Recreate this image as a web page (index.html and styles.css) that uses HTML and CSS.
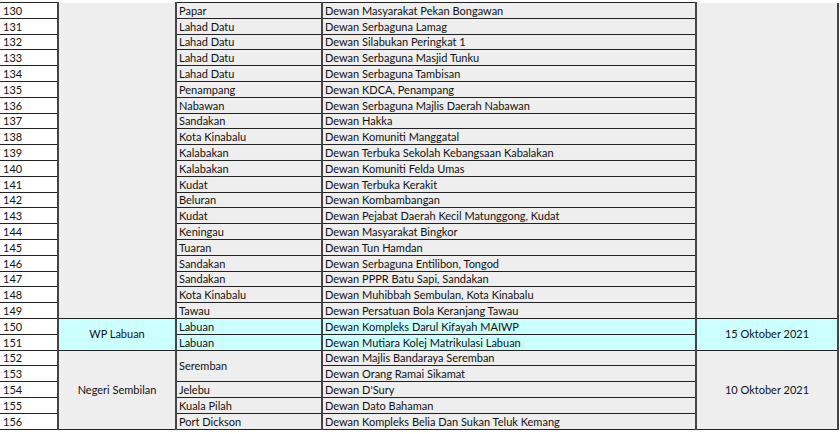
FILE: index.html
```html
<!DOCTYPE html>
<html>
<head>
<meta charset="utf-8">
<link rel="stylesheet" href="styles.css">
</head>
<body>
<table class="sheet">
<colgroup>
<col class="c-no"><col class="c-state"><col class="c-dist"><col class="c-hall"><col class="c-date">
</colgroup>
<tbody>
<tr><td class="no">130</td><td class="state cont" rowspan="20"></td><td class="dist">Papar</td><td class="hall">Dewan Masyarakat Pekan Bongawan</td><td class="date cont" rowspan="20"></td></tr>
<tr><td class="no">131</td><td class="dist">Lahad Datu</td><td class="hall">Dewan Serbaguna Lamag</td></tr>
<tr><td class="no">132</td><td class="dist">Lahad Datu</td><td class="hall">Dewan Silabukan Peringkat 1</td></tr>
<tr><td class="no">133</td><td class="dist">Lahad Datu</td><td class="hall">Dewan Serbaguna Masjid Tunku</td></tr>
<tr><td class="no">134</td><td class="dist">Lahad Datu</td><td class="hall">Dewan Serbaguna Tambisan</td></tr>
<tr><td class="no">135</td><td class="dist">Penampang</td><td class="hall">Dewan KDCA, Penampang</td></tr>
<tr><td class="no">136</td><td class="dist">Nabawan</td><td class="hall">Dewan Serbaguna Majlis Daerah Nabawan</td></tr>
<tr><td class="no">137</td><td class="dist">Sandakan</td><td class="hall">Dewan Hakka</td></tr>
<tr><td class="no">138</td><td class="dist">Kota Kinabalu</td><td class="hall">Dewan Komuniti Manggatal</td></tr>
<tr><td class="no">139</td><td class="dist">Kalabakan</td><td class="hall">Dewan Terbuka Sekolah Kebangsaan Kabalakan</td></tr>
<tr><td class="no">140</td><td class="dist">Kalabakan</td><td class="hall">Dewan Komuniti Felda Umas</td></tr>
<tr><td class="no">141</td><td class="dist">Kudat</td><td class="hall">Dewan Terbuka Kerakit</td></tr>
<tr><td class="no">142</td><td class="dist">Beluran</td><td class="hall">Dewan Kombambangan</td></tr>
<tr><td class="no">143</td><td class="dist">Kudat</td><td class="hall">Dewan Pejabat Daerah Kecil Matunggong, Kudat</td></tr>
<tr><td class="no">144</td><td class="dist">Keningau</td><td class="hall">Dewan Masyarakat Bingkor</td></tr>
<tr><td class="no">145</td><td class="dist">Tuaran</td><td class="hall">Dewan Tun Hamdan</td></tr>
<tr><td class="no">146</td><td class="dist">Sandakan</td><td class="hall">Dewan Serbaguna Entilibon, Tongod</td></tr>
<tr><td class="no">147</td><td class="dist">Sandakan</td><td class="hall">Dewan PPPR Batu Sapi, Sandakan</td></tr>
<tr><td class="no">148</td><td class="dist">Kota Kinabalu</td><td class="hall">Dewan Muhibbah Sembulan, Kota Kinabalu</td></tr>
<tr><td class="no">149</td><td class="dist">Tawau</td><td class="hall">Dewan Persatuan Bola Keranjang Tawau</td></tr>
<tr class="cyan"><td class="no">150</td><td class="state" rowspan="2">WP Labuan</td><td class="dist">Labuan</td><td class="hall">Dewan Kompleks Darul Kifayah MAIWP</td><td class="date" rowspan="2">15 Oktober 2021</td></tr>
<tr class="cyan"><td class="no">151</td><td class="dist">Labuan</td><td class="hall">Dewan Mutiara Kolej Matrikulasi Labuan</td></tr>
<tr><td class="no">152</td><td class="state" rowspan="5">Negeri Sembilan</td><td class="dist" rowspan="2">Seremban</td><td class="hall">Dewan Majlis Bandaraya Seremban</td><td class="date" rowspan="5">10 Oktober 2021</td></tr>
<tr><td class="no">153</td><td class="hall">Dewan Orang Ramai Sikamat</td></tr>
<tr><td class="no">154</td><td class="dist">Jelebu</td><td class="hall">Dewan D'Sury</td></tr>
<tr><td class="no">155</td><td class="dist">Kuala Pilah</td><td class="hall">Dewan Dato Bahaman</td></tr>
<tr><td class="no">156</td><td class="dist">Port Dickson</td><td class="hall">Dewan Kompleks Belia Dan Sukan Teluk Kemang</td></tr>
</tbody>
</table>
</body>
</html>
```
FILE: styles.css
```css
html, body {
  margin: 0;
  padding: 0;
  background: #ffffff;
}
body {
  padding-top: 2px;
}
.sheet {
  border-collapse: collapse;
  table-layout: fixed;
  width: 838px;
  font-family: Lato, "Open Sans", sans-serif;
  font-size: 11px;
  color: #111;
}
.c-no { width: 58px; }
.c-state { width: 118px; }
.c-dist { width: 146px; }
.c-hall { width: 374px; }
.c-date { width: 142px; }
.sheet td {
  height: 15.8px;
  padding: 0 2px;
  box-sizing: border-box;
  border-top: 1px solid #222;
  border-bottom: 1px solid #222;
  border-left: 2px solid #444;
  border-right: 2px solid #444;
  background: #eeeeee;
  white-space: nowrap;
  overflow: hidden;
  line-height: 14px;
  vertical-align: bottom;
}
.sheet td.no {
  background: #ffffff;
  border-left: none;
  padding-left: 3px;
}
.sheet td.state, .sheet td.date {
  text-align: center;
  vertical-align: middle;
}
.sheet td.cont {
  border-top: none;
}
.sheet td.dist, .sheet td.hall {
  padding-left: 2px;
}
.sheet td.dist[rowspan] {
  vertical-align: middle;
}
.cyan td, .cyan td.no {
  background: #ccffff;
}
.cyan td.no { background: #ffffff; }
.sheet td.state.cy, .sheet td.date.cy { background: #ccffff; }
```
